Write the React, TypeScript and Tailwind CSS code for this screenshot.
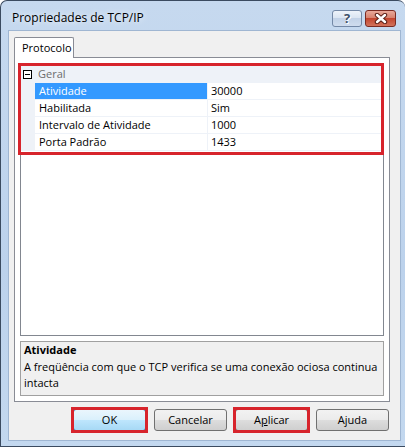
import type { ReactNode } from 'react'
import clsx from 'clsx'

const FONT = "font-['Open_Sans','Noto_Sans',sans-serif]"

const rows = [
  { name: 'Atividade', value: '30000', selected: true },
  { name: 'Habilitada', value: 'Sim' },
  { name: 'Intervalo de Atividade', value: '1000' },
  { name: 'Porta Padrão', value: '1433' },
]

function Annotated({ children }: { children: ReactNode }) {
  return (
    <div className="relative">
      {children}
      <span className="pointer-events-none absolute -inset-[2px] border-[3px] border-[#d7242c]" />
    </div>
  )
}

function WinButton({ children, primary }: { children: ReactNode; primary?: boolean }) {
  return (
    <button
      className={clsx(
        'flex h-[22px] w-[73px] items-center justify-center rounded-[3px] border text-[11px] text-black',
        primary
          ? 'border-[#3c7fb1] bg-[linear-gradient(to_bottom,#eaf6fd_0%,#d9f0fc_50%,#bee6fd_50%,#a7d9f5_100%)]'
          : 'border-[#707070] bg-[linear-gradient(to_bottom,#f2f2f2_0%,#ebebeb_50%,#dddddd_50%,#cfcfcf_100%)]'
      )}
    >
      {children}
    </button>
  )
}

export default function App() {
  return (
    <div className={clsx('h-[447px] w-[405px] overflow-hidden bg-white', FONT)}>
      <div className="flex h-full flex-col rounded-t-[7px] border border-r-0 border-[#3b4b60] bg-[linear-gradient(to_bottom,#c6d9ef,#bcd2ec_60%,#c3d8ef)]">
        {/* title bar */}
        <div className="flex h-[29px] items-start">
          <span className="mt-[9px] ml-[11px] text-[12px] leading-[16px] text-black [text-shadow:0_0_6px_#ffffff]">
            Propriedades de TCP/IP
          </span>
          <div className="mt-[9px] mr-[9px] ml-auto flex gap-[3px]">
            <div className="flex h-[17px] w-[30px] items-center justify-center rounded-[3px] border border-[#7388a6] bg-[linear-gradient(to_bottom,#eef3fa_0%,#dbe5f2_45%,#c2d2e7_50%,#cfdcee_100%)]">
              <span className="text-[13px] leading-none font-bold text-[#3d4f68] [text-shadow:0_0_1px_#fff,1px_1px_0_#fff]">?</span>
            </div>
            <div className="flex h-[17px] w-[31px] items-center justify-center rounded-[3px] border border-[#7a2b22] bg-[linear-gradient(to_bottom,#e9a99a_0%,#d7826f_45%,#c3462f_50%,#d2735c_100%)]">
              <svg width="14" height="11" viewBox="0 0 14 11">
                <path d="M3 2 L11 9 M11 2 L3 9" stroke="#5b2017" strokeWidth="4.4" strokeLinecap="round" />
                <path d="M3 2 L11 9 M11 2 L3 9" stroke="#ffffff" strokeWidth="2.4" strokeLinecap="round" />
              </svg>
            </div>
          </div>
        </div>

        {/* client + frame sides */}
        <div className="flex flex-1 pr-[4px] pb-[5px] pl-[7px]">
          <div className="flex flex-1 flex-col border border-[#9fb6d2] bg-[#f0f0f0] pt-[6px] pl-[5px]">
            {/* tabs */}
            <div className="flex">
              <div className="relative z-10 -mb-px flex h-[21px] w-[60px] items-center rounded-t-[2px] border border-b-0 border-[#898c95] bg-white pl-[7px] text-[11px] text-black">
                Protocolo
              </div>
            </div>

            {/* tab panel */}
            <div className="flex h-[345px] w-[376px] flex-col gap-[5px] border border-[#898c95] bg-white p-[5px]">
              {/* property grid */}
              <div className="relative h-[273px] border border-[#828790] pt-[2px] text-[11px] leading-[16px] text-black">
                <div className="flex h-[17px] items-center border-b border-[#eef2f8] bg-[#eef2f8]">
                  <span className="ml-[2px] flex h-[9px] w-[9px] items-center justify-center border border-black bg-white">
                    <span className="h-px w-[5px] bg-black" />
                  </span>
                  <span className="ml-[6px] text-[#6d6d6d]">Geral</span>
                </div>
                {rows.map(r => (
                  <div key={r.name} className="flex h-[17px] border-b border-[#eef2f8]">
                    <div className="w-[14px] bg-[#eef2f8]" />
                    <div
                      className={clsx(
                        'w-[172px] truncate pl-[4px]',
                        r.selected ? 'bg-[#3399ff] text-white' : 'text-black'
                      )}
                    >
                      {r.name}
                    </div>
                    <div className="flex-1 border-l border-[#eef2f8] pl-[3px]">{r.value}</div>
                  </div>
                ))}
                <span className="pointer-events-none absolute -top-[1px] -right-[1px] -left-[3px] h-[92px] border-[3px] border-[#d7242c]" />
              </div>

              {/* description */}
              <div className="h-[55px] border border-[#a0a0a0] bg-[#f0f0f0] px-[3px] text-[11px] leading-[16px] text-black">
                <p className="mb-px font-bold">Atividade</p>
                <p>A freqüência com que o TCP verifica se uma conexão ociosa continua intacta</p>
              </div>
            </div>

            {/* buttons */}
            <div className="mt-[7px] mr-[11px] flex justify-end gap-[8px]">
              <Annotated>
                <WinButton primary>OK</WinButton>
              </Annotated>
              <WinButton>Cancelar</WinButton>
              <Annotated>
                <WinButton>
                  <span>
                    A<span className="underline">p</span>licar
                  </span>
                </WinButton>
              </Annotated>
              <WinButton>Ajuda</WinButton>
            </div>
          </div>
        </div>
      </div>
    </div>
  )
}
